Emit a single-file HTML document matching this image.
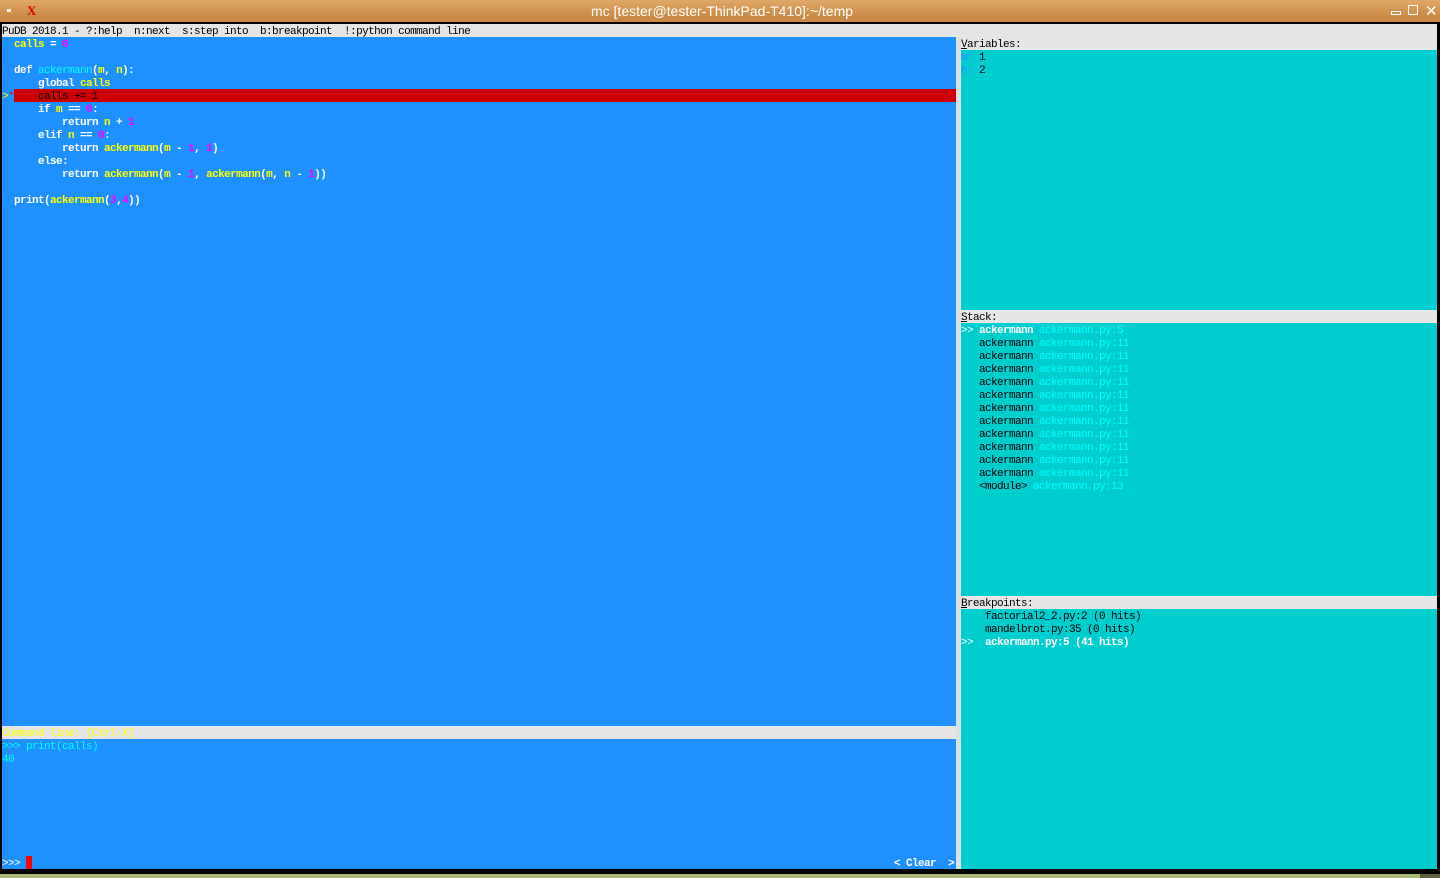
<!DOCTYPE html>
<html><head><style>
*{margin:0;padding:0}
body{width:1440px;height:878px;background:#000;position:relative;overflow:hidden;font-family:"Liberation Mono",monospace;font-size:10px;line-height:13px}
.abs{position:absolute}
pre{font-family:"Liberation Mono",monospace;font-size:11px;letter-spacing:-0.6px;line-height:13px;white-space:pre;position:absolute;margin-top:2px}
.y{color:#ffff00}.m{color:#ff00ff}.c{color:#00ffff}.w{color:#fff}.b{font-weight:bold}.k{color:#000}.fc{color:#00ffff}
</style></head><body>
<div class="abs" style="left:0;top:0;width:1440px;height:22px;background:linear-gradient(180deg,#e0a868,#cf8f4c 60%,#c98845)"></div>
<div class="abs" style="left:7px;top:9px;width:4px;height:3px;background:#fff"></div>
<div class="abs" style="left:27px;top:3px;color:#d00;font:bold 13px 'Liberation Serif',serif">X</div>
<div class="abs" style="left:0;top:3px;width:1440px;text-align:center;color:#fff;font:14px 'Liberation Sans',sans-serif;line-height:16px;padding-left:2px">mc [tester@tester-ThinkPad-T410]:~/temp</div>
<div class="abs" style="left:1391px;top:11px;width:8px;height:2px;border:1px solid #fff"></div>
<div class="abs" style="left:1408px;top:5px;width:8px;height:8px;border:1px solid #fff"></div>
<div class="abs" style="left:1425px;top:2px;color:#fff;font:15px 'Liberation Sans',sans-serif">✕</div>

<div class="abs" style="left:2px;top:24px;width:954px;height:845px;background:#1e90ff"></div>
<div class="abs" style="left:956px;top:24px;width:5px;height:845px;background:#e0e0e0"></div>
<div class="abs" style="left:961px;top:24px;width:476px;height:845px;background:#00cdcd"></div>
<div class="abs" style="left:2px;top:24px;width:1435px;height:13px;background:#e5e5e5"></div>
<div class="abs" style="left:961px;top:37px;width:476px;height:13px;background:#e5e5e5"></div>
<div class="abs" style="left:961px;top:310px;width:476px;height:13px;background:#e5e5e5"></div>
<div class="abs" style="left:961px;top:596px;width:476px;height:13px;background:#e5e5e5"></div>
<div class="abs" style="left:2px;top:726px;width:954px;height:13px;background:#e5e5e5"></div>
<div class="abs" style="left:14px;top:89px;width:942px;height:13px;background:#cd0000"></div>
<div class="abs" style="left:0;top:874px;width:1420px;height:4px;background:#a8bc78"></div>
<div class="abs" style="left:1420px;top:874px;width:20px;height:4px;background:#606040"></div>

<pre class="k" style="left:2px;top:24px">PuDB 2018.1 - ?:help  n:next  s:step into  b:breakpoint  !:python command line</pre>
<pre class="w b" style="left:2px;top:37px">  <span class="y">calls</span> = <span class="m">0</span>

  def <span class="c" style="font-weight:normal">ackermann</span>(<span class="y">m</span>, <span class="y">n</span>):
      global <span class="y">calls</span>
<span class="y" style="font-weight:normal">&gt;</span><span style="color:#f00;font-weight:normal">*</span>    <span class="k" style="font-weight:normal">calls += 1</span>
      if <span class="y">m</span> == <span class="m">0</span>:
          return <span class="y">n</span> + <span class="m">1</span>
      elif <span class="y">n</span> == <span class="m">0</span>:
          return <span class="y">ackermann</span>(<span class="y">m</span> - <span class="m">1</span>, <span class="m">1</span>)
      else:
          return <span class="y">ackermann</span>(<span class="y">m</span> - <span class="m">1</span>, <span class="y">ackermann</span>(<span class="y">m</span>, <span class="y">n</span> - <span class="m">1</span>))

  print(<span class="y">ackermann</span>(<span class="m">3</span>,<span class="m">4</span>))</pre>
<pre class="y" style="left:2px;top:726px">Command line: [Ctrl-X]</pre>
<pre class="c" style="left:2px;top:739px">&gt;&gt;&gt; print(calls)
40</pre>
<pre class="w" style="left:2px;top:856px">&gt;&gt;&gt;</pre>
<div class="abs" style="left:26px;top:856px;width:6px;height:13px;background:#f00"></div>
<pre class="w b" style="left:894px;top:856px">&lt; Clear  &gt;</pre>

<pre class="k" style="left:961px;top:37px"><u>V</u>ariables:</pre>
<pre class="k" style="left:961px;top:50px"><span style="color:#1e90ff">m:</span> 1
<span style="color:#1e90ff">n:</span> 2</pre>
<pre class="k" style="left:961px;top:310px"><u>S</u>tack:</pre>
<pre class="k" style="left:961px;top:323px"><span class="w">&gt;&gt; <b>ackermann</b></span> <span class="fc">ackermann.py:5</span>
   ackermann <span class="fc">ackermann.py:11</span>
   ackermann <span class="fc">ackermann.py:11</span>
   ackermann <span class="fc">ackermann.py:11</span>
   ackermann <span class="fc">ackermann.py:11</span>
   ackermann <span class="fc">ackermann.py:11</span>
   ackermann <span class="fc">ackermann.py:11</span>
   ackermann <span class="fc">ackermann.py:11</span>
   ackermann <span class="fc">ackermann.py:11</span>
   ackermann <span class="fc">ackermann.py:11</span>
   ackermann <span class="fc">ackermann.py:11</span>
   ackermann <span class="fc">ackermann.py:11</span>
   &lt;module&gt; <span class="fc">ackermann.py:13</span></pre>
<pre class="k" style="left:961px;top:596px"><u>B</u>reakpoints:</pre>
<pre class="k" style="left:961px;top:609px">    factorial2_2.py:2 (0 hits)
    mandelbrot.py:35 (0 hits)
<span class="w">&gt;&gt;  <b>ackermann.py:5 (41 hits)</b></span></pre>
</body></html>
